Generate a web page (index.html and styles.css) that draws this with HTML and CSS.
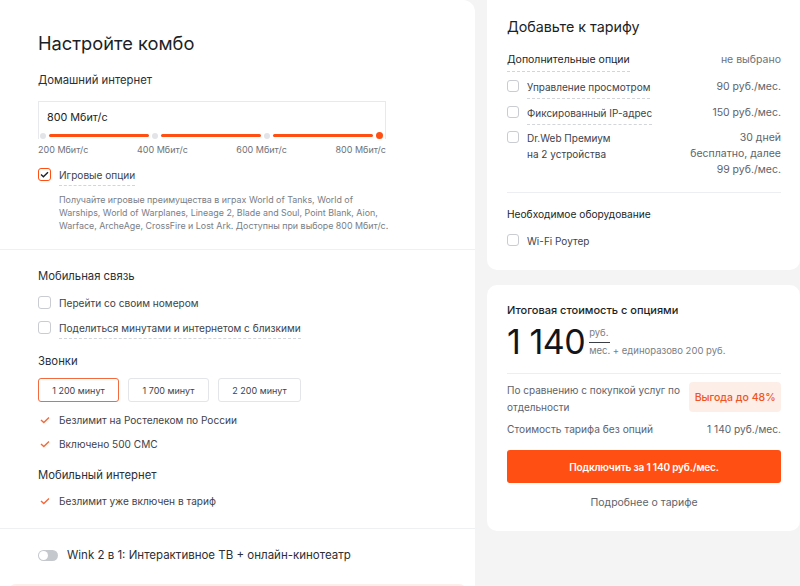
FILE: index.html
```html
<!DOCTYPE html>
<html lang="ru">
<head>
<meta charset="utf-8">
<link rel="stylesheet" href="styles.css">
</head>
<body>
<div class="page">
  <div class="left card-left">
    <section class="sec sec-top">
      <h1 class="title">Настройте комбо</h1>
      <div class="label">Домашний интернет</div>
      <div class="speed-box">
        <div class="speed-value">800 Мбит/с</div>
        <div class="track">
          <span class="dot"></span><span class="seg"></span>
          <span class="dot"></span><span class="seg"></span>
          <span class="dot"></span><span class="seg"></span>
          <span class="dot dot-on"></span>
        </div>
      </div>
      <div class="ticks">
        <span>200 Мбит/с</span><span>400 Мбит/с</span><span>600 Мбит/с</span><span>800 Мбит/с</span>
      </div>
      <div class="check-row game-row">
        <span class="cb cb-on"><svg width="9" height="7" viewBox="0 0 9 7"><path d="M1 3.4 L3.4 5.8 L8 1.2" fill="none" stroke="#1f2229" stroke-width="1.4"/></svg></span>
        <span class="dotted">Игровые опции</span>
      </div>
      <p class="desc">Получайте игровые преимущества в играх World of Tanks, World of Warships, World of Warplanes, Lineage 2, Blade and Soul, Point Blank, Aion, Warface, ArcheAge, CrossFire и Lost Ark. Доступны при выборе 800 Мбит/с.</p>
    </section>
    <section class="sec sec-mobile">
      <div class="label">Мобильная связь</div>
      <div class="check-row mob1"><span class="cb"></span><span>Перейти со своим номером</span></div>
      <div class="check-row mob2"><span class="cb"></span><span class="dotted">Поделиться минутами и интернетом с близкими</span></div>
      <div class="label calls-label">Звонки</div>
      <div class="btns">
        <span class="pill pill-on">1 200 минут</span>
        <span class="pill">1 700 минут</span>
        <span class="pill pill-w">2 200 минут</span>
      </div>
      <div class="tick-item ti1"><svg class="tk" width="10" height="8" viewBox="0 0 10 8"><path d="M1 4 L3.8 6.6 L9 1.4" fill="none" stroke="#f26a3d" stroke-width="1.4"/></svg><span>Безлимит на Ростелеком по России</span></div>
      <div class="tick-item ti2"><svg class="tk" width="10" height="8" viewBox="0 0 10 8"><path d="M1 4 L3.8 6.6 L9 1.4" fill="none" stroke="#f26a3d" stroke-width="1.4"/></svg><span>Включено 500 СМС</span></div>
      <div class="label mi-label">Мобильный интернет</div>
      <div class="tick-item ti3"><svg class="tk" width="10" height="8" viewBox="0 0 10 8"><path d="M1 4 L3.8 6.6 L9 1.4" fill="none" stroke="#f26a3d" stroke-width="1.4"/></svg><span>Безлимит уже включен в тариф</span></div>
    </section>
    <section class="sec sec-tv">
      <div class="toggle-row"><span class="toggle"><span class="knob"></span></span><span>Wink 2 в 1: Интерактивное ТВ + онлайн-кинотеатр</span></div>
      <div class="promo"></div>
    </section>
  </div>
  <div class="right">
    <div class="card card-add">
      <h2 class="r-title">Добавьте к тарифу</h2>
      <div class="opt-head"><span class="dotted dark">Дополнительные опции</span><span class="muted">не выбрано</span></div>
      <div class="opt opt1"><span class="cb"></span><span class="opt-name dotted">Управление просмотром</span><span class="opt-price">90 руб./мес.</span></div>
      <div class="opt opt2"><span class="cb"></span><span class="opt-name dotted">Фиксированный IP-адрес</span><span class="opt-price">150 руб./мес.</span></div>
      <div class="opt opt3"><span class="cb"></span><span class="opt-name">Dr.Web Премиум<br>на 2 устройства</span><span class="opt-price">30 дней<br>бесплатно, далее<br>99 руб./мес.</span></div>
      <div class="hr"></div>
      <div class="eq-title">Необходимое оборудование</div>
      <div class="opt opt4"><span class="cb"></span><span class="opt-name">Wi-Fi Роутер</span></div>
    </div>
    <div class="card card-total">
      <div class="t-title">Итоговая стоимость с опциями</div>
      <div class="price-row">
        <span class="big">1 140</span>
        <span class="unit">
          <span class="unit-top">руб.</span>
          <span class="unit-bot"><span class="mes">мес.</span> + единоразово 200 руб.</span>
        </span>
      </div>
      <div class="hr hr2"></div>
      <div class="cmp-row">
        <span class="cmp-text">По сравнению с покупкой услуг по отдельности</span>
        <span class="badge">Выгода до 48%</span>
      </div>
      <div class="base-row"><span>Стоимость тарифа без опций</span><span>1 140 руб./мес.</span></div>
      <div class="cta">Подключить за 1 140 руб./мес.</div>
      <div class="more">Подробнее о тарифе</div>
    </div>
  </div>
</div>
</body>
</html>
```

FILE: styles.css
```css
* { box-sizing: border-box; }
html, body { margin: 0; padding: 0; }
body {
  background: #f4f4f5;
  font-family: "Inter", "Liberation Sans", sans-serif;
  color: #2b2f36;
  width: 800px;
  height: 586px;
  overflow: hidden;
}
.page {
  display: flex;
  gap: 12px;
  align-items: flex-start;
}
.left {
  width: 475px;
  background: #fff;
  border-radius: 0 12px 0 0;
  flex: none;
}
.sec { padding: 0 38px; }
.sec + .sec { border-top: 1px solid #eef0f2; }
.sec-top { padding-top: 30px; padding-bottom: 17px; }
.title {
  margin: 0;
  font-size: 18.3px;
  line-height: 26px;
  font-weight: 400;
  color: #1c1f26;
}
.label {
  font-size: 11.3px;
  line-height: 18px;
  color: #2b2f36;
}
.sec-top .label { margin-top: 15px; }
.speed-box {
  margin-top: 12px;
  width: 348px;
  height: 38px;
  border: 1px solid #e7e9ec;
  border-bottom: none;
  display: flex;
  flex-direction: column;
}
.speed-value {
  flex: 1;
  display: flex;
  align-items: center;
  padding-left: 8px;
  padding-top: 1px;
  font-size: 10.8px;
  color: #1c1f26;
}
.track {
  height: 7px;
  margin: 0 2px 0 1px;
  display: flex;
  align-items: center;
  gap: 3px;
}
.dot {
  width: 6px; height: 6px; border-radius: 50%;
  background: #e2e4e7; flex: none;
}
.dot-on { width: 7px; height: 7px; background: #ff4f12; }
.seg { flex: 1; height: 3px; background: #ff4f12; border-radius: 2px; }
.ticks {
  width: 348px;
  margin-top: 4px;
  display: flex;
  justify-content: space-between;
  font-size: 9px;
  line-height: 14px;
  color: #6d727a;
}
.check-row {
  display: flex;
  align-items: flex-start;
  gap: 8px;
  font-size: 10.1px;
  line-height: 18px;
  color: #3e434b;
}
.cb {
  width: 13px; height: 13px;
  border: 1px solid #c9ccd2;
  border-radius: 3px;
  flex: none;
  margin-top: 2px;
  display: flex;
  align-items: center;
  justify-content: center;
  background: #fff;
}
.cb-on { border-color: #ff4f12; border-width: 1.5px; }
.dotted {
  border-bottom: 1px dashed #d2d5da;
  padding-bottom: 1px;
}
.game-row { margin-top: 9px; }
.desc {
  margin: 7px 0 0 21px;
  width: 330px;
  font-size: 8.9px;
  line-height: 13px;
  color: #7a7e85;
}
.sec-mobile { padding-top: 17px; padding-bottom: 18px; }
.mob1 { margin-top: 9px; }
.mob2 { margin-top: 7px; }
.calls-label { margin-top: 13px; }
.btns { display: flex; gap: 9px; margin-top: 8px; }
.pill {
  width: 81px; height: 24px;
  border: 1px solid #e3e5e8;
  border-radius: 3px;
  display: flex; align-items: center; justify-content: center;
  font-size: 9px;
  color: #3e434b;
}
.pill-w { width: 83px; }
.pill-on { border-color: #f26a3d; }
.tick-item {
  display: flex;
  align-items: center;
  gap: 9px;
  font-size: 10.1px;
  line-height: 18px;
  color: #3e434b;
  padding-left: 2px;
}
.tk { flex: none; }
.ti1 { margin-top: 9px; }
.ti2 { margin-top: 6px; }
.mi-label { margin-top: 13px; }
.ti3 { margin-top: 8px; }
.sec-tv { padding: 17px 8px 0 38px; }
.toggle-row {
  display: flex; align-items: center; gap: 9px;
  font-size: 11.5px; line-height: 18px; color: #2b2f36;
}
.toggle {
  width: 20px; height: 11px; border-radius: 6px;
  background: #c5c8cd; display: flex; align-items: center; padding: 0 1px;
}
.knob { width: 9px; height: 9px; border-radius: 50%; background: #fff; }
.promo {
  margin: 20px 0 0 -30px;
  height: 30px;
  background: #fdeeea;
  border-radius: 8px 8px 0 0;
}

.right { width: 313px; flex: none; display: flex; flex-direction: column; gap: 15px; }
.card {
  background: #fff;
  border-radius: 10px;
  padding: 0 19px 0 20px;
}
.card-add { border-radius: 0 0 10px 10px; padding-top: 16px; padding-bottom: 21px; }
.r-title {
  margin: 0;
  font-size: 14.3px;
  line-height: 22px;
  font-weight: 400;
  color: #1c1f26;
}
.opt-head {
  margin-top: 14px;
  display: flex; justify-content: space-between; align-items: flex-start;
  font-size: 10.5px; line-height: 16px;
}
.opt-head .dotted { padding-bottom: 3px; }
.dark { color: #1c1f26; }
.muted { color: #6d727a; }
.opt {
  display: flex;
  align-items: flex-start;
  gap: 8px;
  font-size: 10.5px;
  line-height: 16px;
  color: #3e434b;
}
.opt .cb { margin-top: 1px; width: 12px; height: 12px; }
.opt-name { font-size: 10px; }
.opt-name.dotted { padding-bottom: 3px; }
.opt-price { margin-left: auto; text-align: right; color: #5e636b; }
.opt1 { margin-top: 7px; }
.opt2 { margin-top: 6px; }
.opt3 { margin-top: 5px; }
.hr { height: 1px; background: #eceef1; margin-top: 14px; }
.eq-title { margin-top: 13px; font-size: 10.2px; line-height: 16px; color: #1c1f26; }
.opt4 { margin-top: 11px; }

.card-total { padding-top: 17px; padding-bottom: 20px; }
.t-title { font-size: 11px; line-height: 16px; color: #1c1f26; font-weight: 500; }
.price-row { display: flex; align-items: center; gap: 4px; margin-top: 8px; height: 32px; }
.big { font-size: 34px; line-height: 32px; color: #12151b; letter-spacing: -0.5px; }
.unit { display: flex; flex-direction: column; font-size: 9.5px; line-height: 12px; color: #7a7e85; }
.unit-top { padding-bottom: 3px; }
.unit-bot { display: block; }
.mes { display: inline-block; border-top: 1px solid #3a3f47; padding-top: 2px; }
.hr2 { margin-top: 15px; }
.cmp-row { display: flex; justify-content: space-between; align-items: flex-start; margin-top: 8px; }
.cmp-text { width: 185px; font-size: 10px; line-height: 17px; color: #5e636b; }
.badge {
  width: 93px; height: 30px; border-radius: 4px;
  background: #fdeee8; color: #f0541e;
  font-size: 10.5px; font-weight: 500;
  display: flex; align-items: center; justify-content: center;
}
.base-row {
  display: flex; justify-content: space-between;
  margin-top: 5px; font-size: 10.2px; line-height: 16px; color: #5e636b;
}
.cta {
  margin-top: 13px; height: 33px; border-radius: 3px;
  background: #ff4f12; color: #fff;
  display: flex; align-items: center; justify-content: center;
  font-size: 10.1px; font-weight: 600; letter-spacing: -0.2px;
}
.more { margin-top: 12px; text-align: center; font-size: 10.5px; line-height: 16px; color: #5e636b; }
```
